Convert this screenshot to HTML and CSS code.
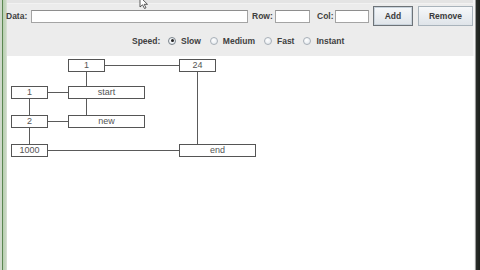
FILE: index.html
```
<!DOCTYPE html>
<html>
<head>
<meta charset="utf-8">
<link rel="stylesheet" href="styles.css">
</head>
<body>
<div class="frame">
  <div class="edge-left"></div>
  <div class="main">
    <div class="strip"></div>
    <div class="toolbar">
      <span class="lbl lbl-data">Data:</span>
      <span class="field field-data"></span>
      <span class="lbl lbl-row">Row:</span>
      <span class="field field-row"></span>
      <span class="lbl lbl-col">Col:</span>
      <span class="field field-col"></span>
      <span class="btn btn-add">Add</span>
      <span class="btn btn-remove">Remove</span>
    </div>
    <div class="speed">
      <span class="lbl">Speed:</span>
      <span class="opt"><span class="radio on"></span><span class="lbl">Slow</span></span>
      <span class="opt"><span class="radio"></span><span class="lbl">Medium</span></span>
      <span class="opt"><span class="radio"></span><span class="lbl">Fast</span></span>
      <span class="opt"><span class="radio"></span><span class="lbl">Instant</span></span>
    </div>
    <div class="canvas">
      <svg class="links" width="470" height="213" viewBox="0 0 470 213">
        <g stroke="#5a5a5a" stroke-width="1" fill="none">
          <line x1="98" y1="9.5" x2="172" y2="9.5"/>
          <line x1="79.5" y1="15" x2="79.5" y2="30"/>
          <line x1="190.5" y1="15" x2="190.5" y2="88"/>
          <line x1="41" y1="36.5" x2="61" y2="36.5"/>
          <line x1="22.5" y1="42" x2="22.5" y2="59"/>
          <line x1="22.5" y1="71" x2="22.5" y2="88"/>
          <line x1="79.5" y1="42" x2="79.5" y2="59"/>
          <line x1="41" y1="65.5" x2="61" y2="65.5"/>
          <line x1="41" y1="94.5" x2="172" y2="94.5"/>
        </g>
      </svg>
      <div class="node small" style="left:61px;top:3px">1</div>
      <div class="node small" style="left:172px;top:3px">24</div>
      <div class="node small" style="left:4px;top:30px">1</div>
      <div class="node wide" style="left:61px;top:30px">start</div>
      <div class="node small" style="left:4px;top:59px">2</div>
      <div class="node wide" style="left:61px;top:59px">new</div>
      <div class="node small" style="left:4px;top:88px">1000</div>
      <div class="node wide" style="left:172px;top:88px">end</div>
    </div>
  </div>
  <div class="edge-right"></div>
</div>
<svg class="cursor" width="10" height="10" viewBox="0 0 10 10">
  <path d="M1 -3 L1 7 L3.5 4.8 L5.5 8.5 L7 7.8 L5.2 4.3 L8.5 4.3 Z" fill="#fff" stroke="#333" stroke-width="0.8"/>
</svg>
</body>
</html>
```
FILE: styles.css
```
html, body {
  margin: 0;
  padding: 0;
}
body {
  width: 480px;
  height: 270px;
  overflow: hidden;
  position: relative;
  background: #ececec;
  font-family: "Liberation Sans", Arial, sans-serif;
}
.frame {
  display: flex;
  width: 480px;
  height: 270px;
}
.edge-left {
  width: 7px;
  flex: none;
  background: linear-gradient(to right, #cfd9cb 0, #cfd9cb 2px, #5b8751 2px, #5b8751 3px, #b9cfb2 3px, #c9d8c3 6px, #dfe3dd 7px);
}
.edge-right {
  width: 7px;
  flex: none;
  background: linear-gradient(to right, #f4f4f4 0, #f4f4f4 2px, #9a9a9a 2px, #9a9a9a 3px, #2a2e2a 3px, #1c1f1c 7px);
}
.main {
  flex: 1;
  display: flex;
  flex-direction: column;
  min-width: 0;
}
.strip {
  height: 3px;
  flex: none;
  background: #e4e4e4;
  border-bottom: 1px solid #f2f2f2;
}
.toolbar {
  height: 22px;
  flex: none;
  display: flex;
  align-items: center;
  padding-top: 1px;
}
.lbl {
  font-size: 8.5px;
  font-weight: bold;
  color: #404040;
  white-space: nowrap;
}
.lbl-data { margin-left: -1px; width: 25px; }
.field {
  height: 13px;
  box-sizing: border-box;
  background: #fff;
  border: 1px solid #a4a4a4;
  border-top-color: #8e8e8e;
  display: block;
  flex: none;
}
.field-data { width: 217px; }
.lbl-row { margin-left: 4px; width: 23px; }
.field-row { width: 35px; }
.lbl-col { margin-left: 7px; width: 18px; }
.field-col { width: 34px; }
.btn {
  box-sizing: border-box;
  height: 20px;
  display: flex;
  align-items: center;
  justify-content: center;
  font-size: 8.5px;
  font-weight: bold;
  color: #3a3a3a;
  background: linear-gradient(#f6f8fa, #dfe4e9);
  flex: none;
}
.btn-add {
  margin-left: 4px;
  width: 40px;
  border: 1px solid #6d7378;
  box-shadow: inset 0 0 0 1px #c9d3dc;
}
.btn-remove {
  margin-left: 5px;
  width: 55px;
  border: 1px solid #a9b3bb;
}
.speed {
  height: 29px;
  flex: none;
  display: flex;
  align-items: center;
  padding-left: 125px;
  padding-bottom: 2px;
  box-sizing: border-box;
}
.speed > .lbl { width: 36px; }
.opt {
  display: flex;
  align-items: center;
  margin-right: 9px;
}
.radio {
  width: 8px;
  height: 8px;
  box-sizing: border-box;
  border-radius: 50%;
  border: 1px solid #a8b0b8;
  background: radial-gradient(circle at 40% 35%, #ffffff, #dde3ea);
  margin-right: 5px;
  position: relative;
  flex: none;
}
.radio.on {
  border-color: #7b848c;
}
.radio.on::after {
  content: "";
  position: absolute;
  left: 1.5px;
  top: 1.5px;
  width: 3px;
  height: 3px;
  border-radius: 50%;
  background: #222;
}
.canvas {
  flex: 1;
  background: #fff;
  position: relative;
  margin-right: -1px;
}
.links {
  position: absolute;
  left: 0;
  top: 0;
}
.node {
  position: absolute;
  box-sizing: border-box;
  height: 13px;
  border: 1px solid #555;
  background: #fff;
  font-size: 9px;
  line-height: 11px;
  color: #555;
  text-align: center;
}
.node.small { width: 37px; }
.node.wide { width: 77px; }
.cursor {
  position: absolute;
  left: 139px;
  top: 0;
}
```
